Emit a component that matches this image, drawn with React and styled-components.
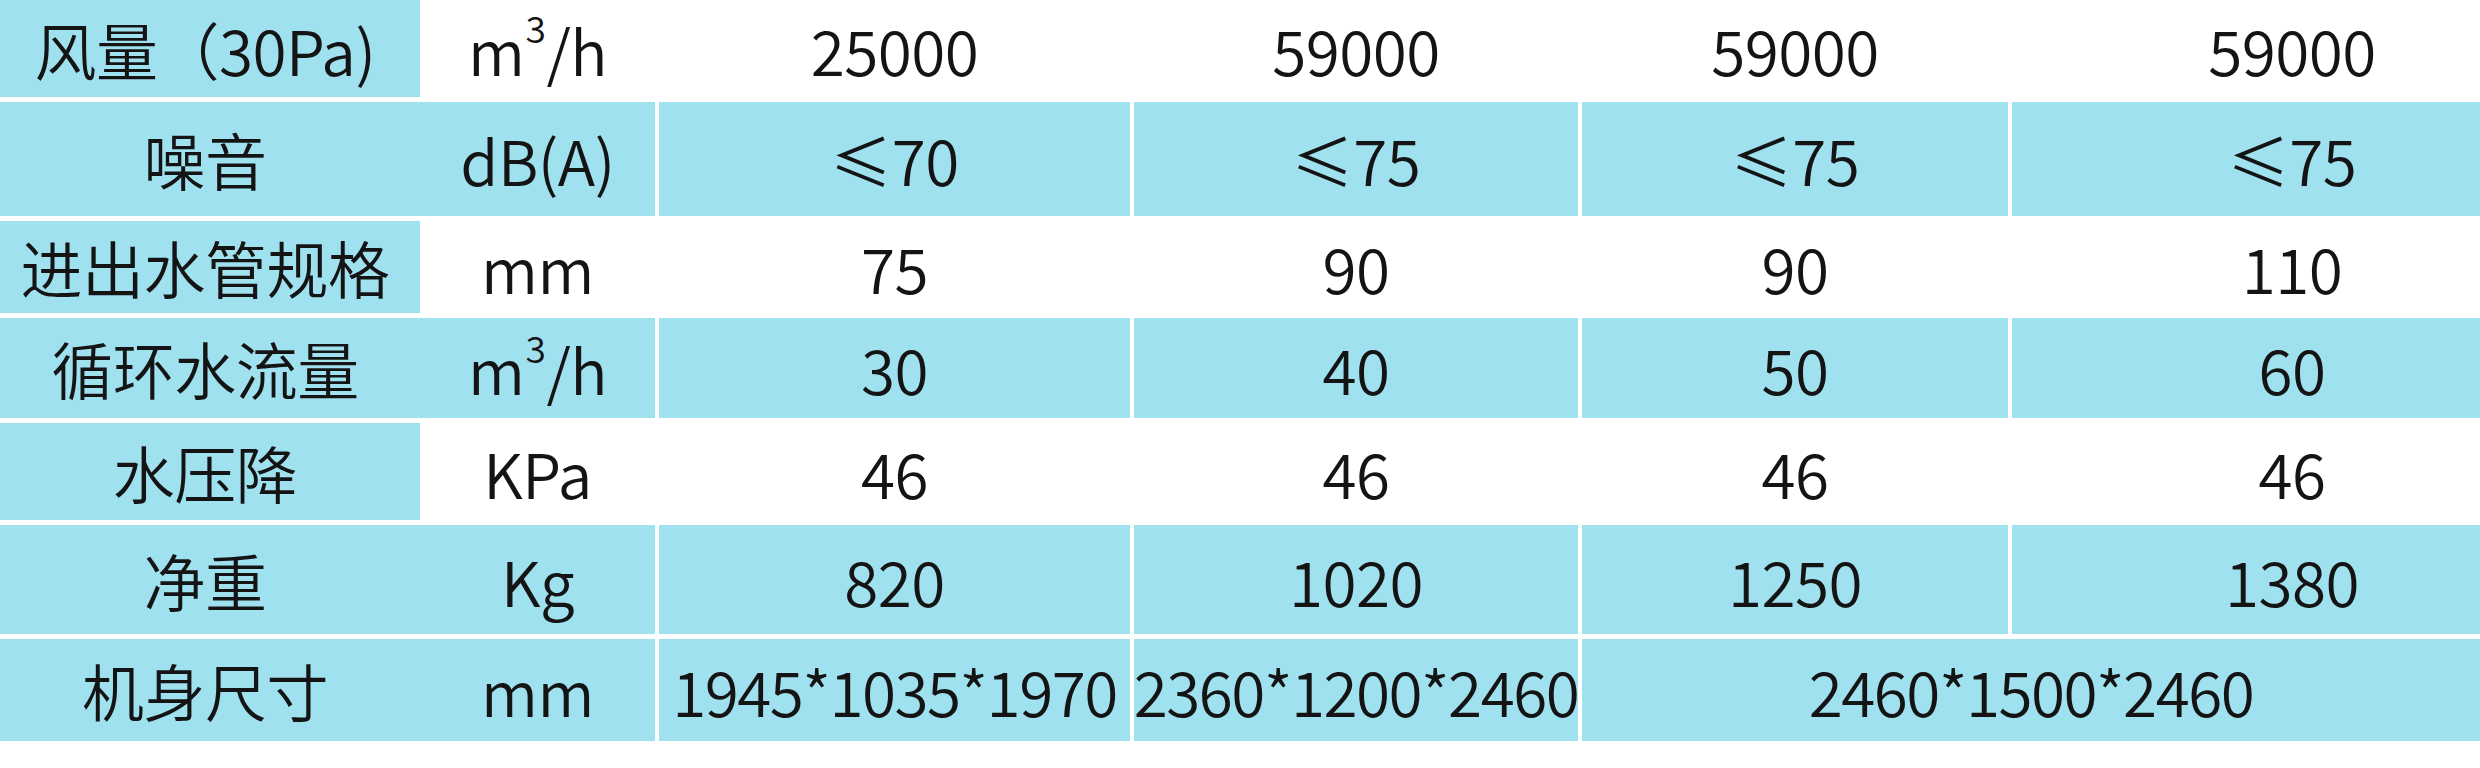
import React from "react";
import styled, { createGlobalStyle } from "styled-components";

// Page reset and base font
const GlobalStyle = createGlobalStyle`
  html, body {
    margin: 0;
    padding: 0;
    background: #fff;
    overflow: hidden;
  }
  body {
    font-family: "Noto Sans CJK SC", "Noto Sans", sans-serif;
    color: #141414;
  }
`;

const BLUE = "#a0e1ef";

// Table rows data
const rows = [
  {
    label: "风量（30Pa)",
    unit: "m3/h",
    values: ["25000", "59000", "59000", "59000"],
    h: 97,
    filled: false,
  },
  {
    label: "噪音",
    unit: "dB(A)",
    values: ["≤70", "≤75", "≤75", "≤75"],
    h: 114,
    filled: true,
  },
  {
    label: "进出水管规格",
    unit: "mm",
    values: ["75", "90", "90", "110"],
    h: 92,
    filled: false,
  },
  {
    label: "循环水流量",
    unit: "m3/h",
    values: ["30", "40", "50", "60"],
    h: 100,
    filled: true,
  },
  {
    label: "水压降",
    unit: "KPa",
    values: ["46", "46", "46", "46"],
    h: 97,
    filled: false,
  },
  {
    label: "净重",
    unit: "Kg",
    values: ["820", "1020", "1250", "1380"],
    h: 109,
    filled: true,
  },
  {
    label: "机身尺寸",
    unit: "mm",
    values: ["1945*1035*1970", "2360*1200*2460", { text: "2460*1500*2460", span: 2 }],
    h: 102,
    filled: true,
  },
];

function Unit({ value }) {
  if (value === "m3/h") {
    return (
      <>
        m<Sup>3</Sup>/h
      </>
    );
  }
  return value;
}

function App() {
  return (
    <>
      <GlobalStyle />
      <Table>
        {rows.map((row, i) => (
          <Row key={i} $h={row.h}>
            <LabelCell>{row.label}</LabelCell>
            <UnitCell $filled={row.filled}>
              <Unit value={row.unit} />
            </UnitCell>
            {row.values.map((v, j) => {
              const text = typeof v === "string" ? v : v.text;
              const span = typeof v === "string" ? 1 : v.span;
              return (
                <ValueCell
                  key={j}
                  $filled={row.filled}
                  $span={span}
                  $last={j === 3}
                  $long={text.length > 8}
                >
                  {text}
                </ValueCell>
              );
            })}
          </Row>
        ))}
      </Table>
    </>
  );
}

const Table = styled.div`
  display: flex;
  flex-direction: column;
  gap: 5px;
  width: 2480px;
`;

const Row = styled.div`
  display: grid;
  grid-template-columns: 420px 235px 475px 448px 430px 472px;
  height: ${(p) => p.$h}px;
`;

const BaseCell = styled.div`
  display: flex;
  align-items: center;
  justify-content: center;
  box-sizing: border-box;
  font-size: 62px;
  font-weight: 350;
  line-height: 1;
  white-space: nowrap;
  letter-spacing: -0.5px;
`;

const LabelCell = styled(BaseCell)`
  background: ${BLUE};
  padding-right: 10px;
`;

const UnitCell = styled(BaseCell)`
  background: ${(p) => (p.$filled ? BLUE : "#fff")};
`;

const ValueCell = styled(BaseCell)`
  grid-column: span ${(p) => p.$span};
  background: ${(p) => (p.$filled ? BLUE : "#fff")};
  border-left: 4px solid #fff;
  padding-left: ${(p) => (p.$last ? 92 : 0)}px;
  letter-spacing: ${(p) => (p.$long ? -1.5 : -0.5)}px;
`;

const Sup = styled.span`
  font-size: 0.6em;
  position: relative;
  top: -0.55em;
  margin: 0 1px;
`;

export default App;
